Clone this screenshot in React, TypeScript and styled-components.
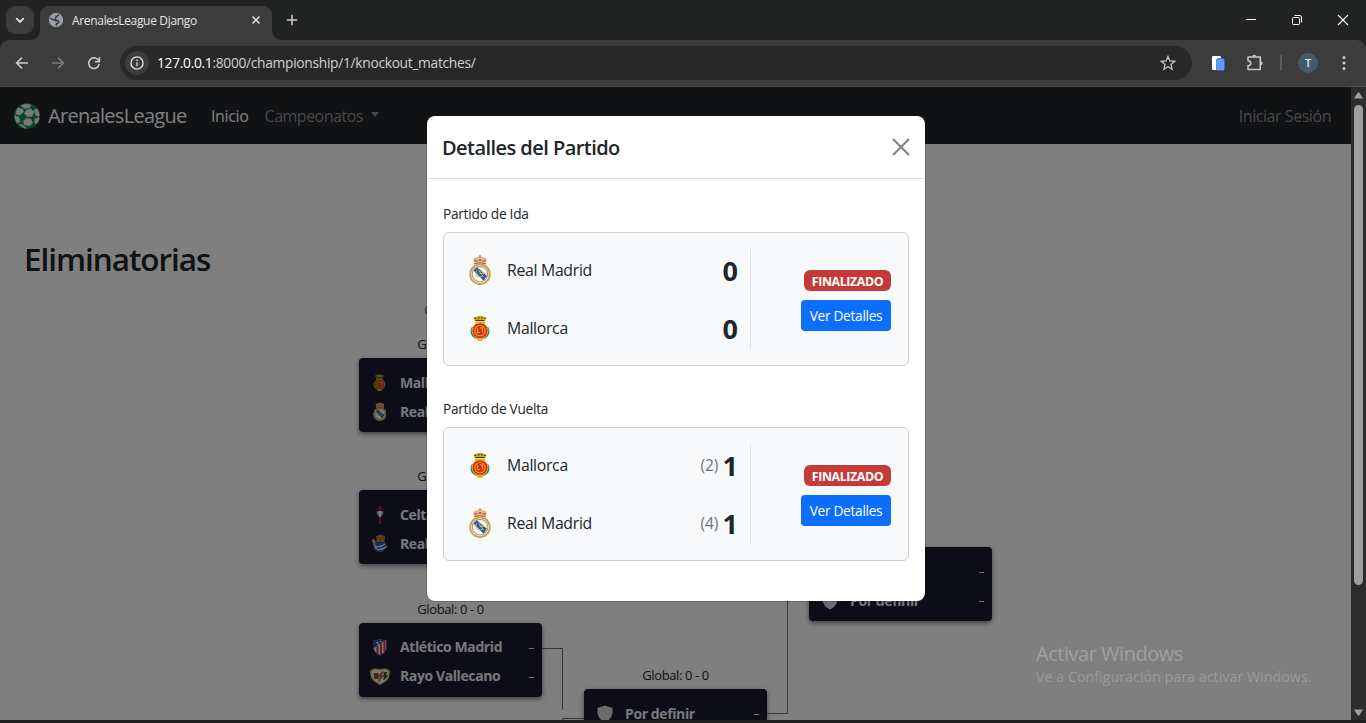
import React from "react";
import styled, { createGlobalStyle } from "styled-components";

const GlobalStyle = createGlobalStyle`
  * { box-sizing: border-box; }
  svg { display: block; flex: none; }
  body {
    margin: 0;
    overflow: hidden;
    font-family: "Open Sans", "Noto Sans", sans-serif;
    color: #212529;
    background: #201f1f;
  }
`;

/* ---------- text ---------- */

const Label = styled.span<{ $size: number; $track?: number; $weight?: number; $color?: string; $line?: number }>`
  display: block;
  white-space: nowrap;
  font-size: ${(p) => p.$size}px;
  line-height: ${(p) => p.$line ?? 20}px;
  letter-spacing: ${(p) => p.$track ?? 0}px;
  font-weight: ${(p) => p.$weight ?? 400};
  color: ${(p) => p.$color ?? "#212529"};
`;

/* ---------- browser frame ---------- */

const Window = styled.div`
  display: flex;
  flex-direction: column;
  width: 1366px;
  height: 723px;
  overflow: hidden;
`;

const TabStrip = styled.header`
  display: flex;
  height: 40px;
  padding: 6px 0 0 6px;
  background: #202322;
`;

const TabSearch = styled.div`
  display: grid;
  place-items: center;
  width: 28px;
  height: 28px;
  margin-right: 6px;
  border-radius: 9px;
  background: #3c3c3c;
`;

const Tab = styled.div`
  position: relative;
  display: flex;
  align-items: center;
  width: 232px;
  height: 34px;
  padding: 0 11px 6px 8px;
  border-radius: 9px 9px 0 0;
  background: #3c3c3c;
  &::before,
  &::after {
    content: "";
    position: absolute;
    bottom: 0;
    width: 9px;
    height: 9px;
  }
  &::before {
    left: -9px;
    background: radial-gradient(circle at 0 0, transparent 8.5px, #3c3c3c 9px);
  }
  &::after {
    right: -9px;
    background: radial-gradient(circle at 100% 0, transparent 8.5px, #3c3c3c 9px);
  }
`;

const TabTitle = styled(Label)`
  flex: 1;
  margin-left: 8px;
  padding-top: 2px;
`;

const NewTab = styled.div`
  flex: 1;
  padding: 8px 0 0 14px;
`;

const WindowButtons = styled.div`
  display: flex;
  gap: 34px;
  padding: 8px 17px 0 0;
  height: 20px;
`;

const ToolbarBack = styled.div`
  background: #202322;
`;

const Toolbar = styled.div`
  display: flex;
  align-items: center;
  height: 47px;
  padding: 0 14px 0 14px;
  border-bottom: 1px solid #4b4b4b;
  border-radius: 9px 9px 0 0;
  background: #3c3c3c;
`;

const NavButtons = styled.div`
  display: flex;
  flex: none;
  gap: 20px;
  width: 106px;
`;

const AddressBar = styled.div`
  display: flex;
  flex: none;
  align-items: center;
  width: 1072px;
  height: 34px;
  padding: 0 16px 0 5px;
  border-radius: 17px;
  background: #282828;
`;

const SiteInfo = styled.div`
  display: grid;
  place-items: center;
  width: 24px;
  height: 24px;
  margin-right: 8px;
  border-radius: 50%;
  background: #3c3c3c;
`;

const Url = styled(Label)`
  flex: 1;
  b { font-weight: 400; color: #ffffff; }
`;

const ToolbarActions = styled.div`
  display: flex;
  flex: none;
  align-items: center;
  padding-left: 18px;
`;

const PuzzleSlot = styled.div`
  margin-left: 20px;
`;

const Separator = styled.i`
  width: 2px;
  height: 16px;
  margin: 0 16px;
  border-radius: 1px;
  background: #5c5c5c;
`;

const Avatar = styled.div`
  display: grid;
  place-items: center;
  width: 20px;
  height: 20px;
  margin-right: 18px;
  border-radius: 50%;
  background: #455a66;
`;

/* ---------- page ---------- */

const Viewport = styled.div`
  position: relative;
  display: flex;
  height: 633px;
`;

const Page = styled.div`
  width: 1351px;
  height: 633px;
  overflow: hidden;
  background: #ffffff;
`;

const Scrollbar = styled.div`
  display: flex;
  flex-direction: column;
  align-items: center;
  width: 15px;
  padding: 5px 0 4px;
  background: #2c2c2c;
`;

const Thumb = styled.div`
  width: 9px;
  height: 480px;
  margin: 6px 0 auto;
  border-radius: 5px;
  background: #9f9f9f;
`;

const Navbar = styled.nav`
  display: flex;
  align-items: center;
  height: 57px;
  padding: 0 20px 0 13px;
  background: #212529;
`;

const Brand = styled(Label)`
  width: 163px;
  margin-left: 7px;
`;

const MenuLabel = styled(Label)`
  margin-left: 16px;
`;

const Caret = styled.i`
  margin: 0 auto 3px 8px;
  border: 4.5px solid transparent;
  border-top: 5px solid #8f9193;
  border-bottom: 0;
`;

const Title = styled.h1`
  margin: 95px 0 0 24px;
  font-size: 31.5px;
  line-height: 40px;
  font-weight: 600;
  letter-spacing: -1.05px;
`;

const Bracket = styled.section`
  position: relative;
  display: flex;
  gap: 42px;
  padding-left: 359px;
`;

const Round = styled.div<{ $top: number }>`
  display: flex;
  flex-direction: column;
  align-items: center;
  width: 183px;
  padding-top: ${(p) => p.$top}px;
`;

const RoundName = styled(Label)`
  margin-bottom: 15px;
`;

const Tie = styled.article`
  display: flex;
  flex-direction: column;
  align-items: center;
  width: 183px;
  margin-bottom: 35.4px;
`;

const TieCard = styled.div`
  width: 183px;
  height: 74px;
  margin-top: 4px;
  padding: 10px 8px 6px;
  border-radius: 4px;
  background: #1a1a2e;
  box-shadow: 0 2px 5px rgba(0, 0, 0, 0.5);
`;

const TieRow = styled.div`
  display: grid;
  grid-template-columns: 25px 1fr auto;
  column-gap: 8px;
  align-items: center;
  height: 29px;
  svg { justify-self: center; }
`;

const Dash = styled.i`
  width: 5px;
  height: 1px;
  margin: 2px 0 0;
  background: #e6e6e6;
`;

const Connectors = styled.svg`
  position: absolute;
  left: 0;
  top: 1px;
  pointer-events: none;
`;

/* ---------- modal ---------- */

const Backdrop = styled.div`
  position: absolute;
  inset: 0 15px 0 0;
  background: rgba(0, 0, 0, 0.5);
`;

const Modal = styled.div`
  position: absolute;
  left: 427px;
  top: 29px;
  width: 498px;
  height: 485px;
  border-radius: 8px;
  background: #ffffff;
  box-shadow: 0 0 0 1px rgba(0, 0, 0, 0.18);
`;

const ModalHeader = styled.div`
  display: flex;
  align-items: center;
  justify-content: space-between;
  height: 63px;
  padding: 0 15px;
  border-bottom: 1px solid #dee2e6;
`;

const ModalTitle = styled(Label)`
  padding-top: 2px;
`;

const ModalBody = styled.div`
  padding: 25px 16px 0;
`;

const Leg = styled.section`
  margin-bottom: 33px;
`;

const LegCard = styled.div`
  display: flex;
  height: 134px;
  margin-top: 8px;
  padding: 16px 17px 16px 16px;
  border: 1px solid #cfd2d5;
  border-radius: 6px;
  background: #f8f9fa;
`;

const Teams = styled.div`
  display: flex;
  flex-direction: column;
  gap: 16px;
  width: 291px;
  height: 100px;
  padding-right: 12px;
  border-right: 1px solid #dee2e6;
`;

const TeamRow = styled.div`
  display: grid;
  grid-template-columns: 40px 1fr auto 16px;
  align-items: center;
  height: 42px;
  column-gap: 4px;
  svg { justify-self: center; }
`;

const TeamName = styled(Label)`
  margin-left: 3px;
`;

const Score = styled(Label)`
  padding-top: 2px;
  text-align: right;
`;

const LegActions = styled.div`
  display: flex;
  flex: 1;
  flex-direction: column;
  align-items: flex-end;
  justify-content: center;
  gap: 9px;
  padding-top: 2px;
`;

const Badge = styled.span`
  width: 87px;
  height: 21px;
  border-radius: 6px;
  background: #c53a38;
  color: #ffffff;
  font-size: 12.4px;
  font-weight: 700;
  line-height: 23.5px;
  letter-spacing: -0.4px;
  text-align: center;
`;

const DetailsButton = styled.button`
  width: 90px;
  height: 31px;
  padding: 0;
  border: 0;
  border-radius: 4px;
  background: #0d6efd;
  color: #ffffff;
  font-family: inherit;
  font-size: 13.7px;
  line-height: 31px;
  letter-spacing: -0.3px;
`;

const Watermark = styled.div`
  position: absolute;
  left: 1036px;
  top: 554px;
`;

/* ---------- drawings ---------- */

const MadridCrest = ({ h = 30 }: { h?: number }) => (
  <svg width={(h * 22) / 30} height={h} viewBox="0 0 22 30">
    <path d="M5.500 9.500 4 4.500Q5 2 8 2.500L11 .8l3 1.700q3-.5 4 2l-1.500 5Q11 7.800 5.500 9.500Z" fill="#dfbd8c" />
    <path d="M5.500 5h3v1.500h-3zM9.800 4h2.400v2H9.800zM13.500 5h3v1.500h-3z" fill="#cf5560" />
    <path d="M11 0v2.500M5 8.800q6-1.800 12 0" stroke="#c06a5a" strokeWidth="1.200" fill="none" />
    <circle cx="11" cy="19.200" r="9.800" fill="#fbfaf5" stroke="#c4a54c" strokeWidth="1.900" />
    <circle cx="11" cy="19.200" r="7.800" fill="none" stroke="#a99d78" strokeWidth="1.100" />
    <path d="M4.500 15.500 8 12.300l10 8.400-3.500 5Z" fill="#2f57a6" />
    <path d="M7.500 15.500q-2 4 1 6 3.500 1.500 5.500-1M9 14.500l5.500 7.500M10.500 18.500h4q-.5-2.500-3-2.500" fill="none" stroke="#d3b648" strokeWidth="1" />
  </svg>
);

const MallorcaCrest = ({ h = 26 }: { h?: number }) => (
  <svg width={(h * 20) / 26} height={h} viewBox="0 0 20 26">
    <path d="M2 12q-3 4 0 9l4 3h8l4-3q3-5 0-9Z" fill="#16805a" />
    <path d="M5 6.500 3.500 2 7 1.500 10 .5l3 1 3.500.5L15 6.500Z" fill="#c5b316" />
    <path d="M4.500 3.500h2M8 2.800h1.500M11 2.800h1.500M14 3.500h1.500M5.500 5.500h9" stroke="#3f3a12" strokeWidth="1.200" />
    <path d="M5 7h10v4H5zM5 22h10l-3 4H8z" fill="#d7c21c" />
    <circle cx="10" cy="15.700" r="8" fill="#d92c1c" stroke="#d8c31d" strokeWidth="1" />
    <circle cx="10" cy="15.700" r="5.200" fill="none" stroke="#efa51c" strokeWidth="1.100" />
    <path d="M7.500 13v4.500h2.500M10 13h2.500v4.500" fill="none" stroke="#f2b01e" strokeWidth="1.100" />
  </svg>
);

const CeltaCrest = () => (
  <svg width="10" height="18" viewBox="0 0 10 18">
    <path d="M5 0v18M2.500 2.500h5" stroke="#b02540" strokeWidth="1.700" />
    <path d="M1 5h8l-1.500 4L5 12 2.500 9Z" fill="#9dbbd2" />
    <path d="M5 5v6M3 6.500h4" stroke="#f4f4f4" strokeWidth="1.800" />
    <path d="M5 11v7M1 5.500h1.500M7.500 5.500H9" stroke="#b02540" strokeWidth="1.600" />
  </svg>
);

const SociedadCrest = () => (
  <svg width="16" height="19" viewBox="0 0 16 19">
    <path d="M4.500 8V4L4 2l3-.8L8.500 0 10 1.200l3 .8-.5 6Z" fill="#b9812f" />
    <path d="M5.500 3.500h1.500M10 3.500h1.500M7 6h3" stroke="#6f4a1b" strokeWidth="1" />
    <path d="M1 5l9 12" stroke="#dfc58b" strokeWidth="1.200" />
    <path d="M.5 9 13.500 8l2 5-5 5-6-.5-3-3Z" fill="#2e61ae" />
    <path d="M4 12.500q4 1 9-2.500M5 15.500q5 1 9.500-3M.5 6l4 9" stroke="#dfe9f4" strokeWidth="1.300" fill="none" />
  </svg>
);

const AtleticoCrest = () => (
  <svg width="14" height="17" viewBox="0 0 14 17">
    <path d="M.5 1.500 7 .5l6.500 1V10Q12 14.500 7 16.500 2 14.500.5 10Z" fill="#f0eef0" />
    <path d="M4.500 7v8M8 4.500V16M11.500 2v11" stroke="#cf3048" strokeWidth="1.900" />
    <path d="M.5 1.500 7 .5l5 .8L.5 9.500Z" fill="#33508f" />
    <path d="M3 3.500h2v3M7 2.500h1.500" stroke="#e6ebf4" strokeWidth="1.200" fill="none" />
    <path d="M.5 1.500V10Q2 14.500 7 16.500 12 14.500 13.500 10V1.500" fill="none" stroke="#3a4c85" strokeWidth=".7" />
  </svg>
);

const RayoCrest = () => (
  <svg width="20" height="17" viewBox="0 0 20 17">
    <path d="M1 2.500 5 1l5 .8L15 1l4 1.500Q20 9 15.500 13L10 16.500 4.500 13Q0 9 1 2.500Z" fill="#f2efe0" stroke="#d5bd55" strokeWidth="1.300" />
    <path d="M3.500 5h5v6h-4Z" fill="#b83b22" />
    <path d="M4.500 5v5M8 5v6" stroke="#4e6930" strokeWidth="1" />
    <path d="M13 3.500 9.500 8h2.500l-3 5" fill="none" stroke="#dc3439" strokeWidth="1.500" />
    <path d="M13.500 5h2.500l-2 3h2.500l-3 3.500" fill="none" stroke="#36322c" strokeWidth="1.700" />
  </svg>
);

const ShieldIcon = () => (
  <svg width="16" height="18" viewBox="0 0 16 18">
    <path d="M8 .5 15.500 3v5Q14.500 14.500 8 17.500 1.500 14.500.5 8V3Z" fill="#d9d9d9" />
  </svg>
);

const BallLogo = () => (
  <svg width="28" height="28" viewBox="0 0 28 28">
    <defs>
      <clipPath id="ball"><circle cx="14" cy="14" r="12.600" /></clipPath>
    </defs>
    <circle cx="14" cy="14" r="13" fill="#0b8c4c" />
    <g clipPath="url(#ball)" fill="#f2f2f2" stroke="#f2f2f2" strokeWidth=".6" strokeLinejoin="round">
      <path d="M8 3.500 13 2l5 1-1.500 2.800-5 .8Z" />
      <path d="M13 8.500l4.500-1.700 3.500 3-1.800 4.500-5 .2-2.700-3Z" />
      <path d="M4.500 6 9.500 7l1 3-3.800 3.300-4-1.500Z" />
      <path d="M1 13.500l5 1.700 1 4.300-3 2Z" />
      <path d="M13 16.500l4.700.5 2 4-3.500 3-5-1.500-.7-3.500Z" />
      <path d="M21.500 8l3-1.500L27 12l-1.500 2.500-3-1.500ZM22 17l4-1.500.5 2-3 4.500-2-1.500Z" />
      <path d="M6 22.500l3.500.5 3.500 2.500v2Z" />
    </g>
  </svg>
);

const GlobeIcon = () => (
  <svg width="16" height="16" viewBox="0 0 16 16">
    <circle cx="8" cy="8" r="7.200" fill="#9ba0a8" />
    <path d="M2.200 6.200l3.300 1.600q2 .3 2.200-1.300-.2-1.700 1.300-2.200l1.800-1.800" fill="none" stroke="#3c3c3c" strokeWidth="1.500" />
    <path d="M6.500 8.600h3.300q1.400.6.900 2-.6 1-2 1l-.8 2.400" fill="none" stroke="#3c3c3c" strokeWidth="1.600" />
  </svg>
);

const stroke = (d: string, color: string, width: number, size = 16) => (
  <svg width={size} height={size} viewBox={`0 0 ${size} ${size}`} fill="none" stroke={color} strokeWidth={width}>
    <path d={d} />
  </svg>
);

const BackIcon = () => stroke("M14 8H3M8 2.600 2.600 8 8 13.400", "#c7c7c7", 1.600);
const ForwardIcon = () => stroke("M2 8h11M8 2.600 13.400 8 8 13.400", "#7c7c7c", 1.600);
const ReloadIcon = () => stroke("M13 6.500A5.300 5.300 0 1 0 13.200 9M13.400 2v4.700H8.800", "#c7c7c7", 1.600);
const ChevronIcon = () => stroke("M4.200 6.200 8 10l3.800-3.800", "#e3e3e3", 1.800);
const TabCloseIcon = () => stroke("M1.500 1.500l7 7M8.500 1.500l-7 7", "#e3e3e3", 1.500, 10);
const PlusIcon = () => stroke("M6 .8v10.400M.8 6h10.400", "#d0d0d0", 1.500, 12);
const MinimizeIcon = () => stroke("M1 5.500h10", "#ffffff", 1, 12);
const CloseWindowIcon = () => stroke("M1 1l10 10M11 1 1 11", "#ffffff", 1.100, 12);
const ModalCloseIcon = () => stroke("M1 1l16 16M17 1 1 17", "#7f7f7f", 2, 18);

const RestoreIcon = () => (
  <svg width="12" height="12" viewBox="0 0 12 12" fill="none" stroke="#ffffff">
    <rect x="1.500" y="3.500" width="7" height="7" rx="1" />
    <path d="M3.500 1.500H9q1.500 0 1.500 1.500v5.500" />
  </svg>
);

const InfoIcon = () => (
  <svg width="14" height="14" viewBox="0 0 14 14" fill="none" stroke="#dedede" strokeWidth="1.400">
    <circle cx="7" cy="7" r="6.100" />
    <path d="M7 6.200v4M7 3.500v1.500" />
  </svg>
);

const StarIcon = () => (
  <svg width="16" height="16" viewBox="0 0 16 16" fill="none" stroke="#c7c7c7" strokeWidth="1.300">
    <path d="M8 1.500 9.900 6l4.700.4-3.600 3.100 1.100 4.700L8 11.700l-4.100 2.500L5 9.500 1.400 6.400 6.100 6Z" />
  </svg>
);

const DevicesIcon = () => (
  <svg width="16" height="16" viewBox="0 0 16 16">
    <rect x="2" y="1" width="9" height="14" rx="1.200" fill="#ffffff" />
    <rect x="6.500" y="3.500" width="8" height="12" rx="1.500" fill="#5c9dfc" stroke="#2f5fae" strokeWidth=".6" />
  </svg>
);

const PuzzleIcon = () => (
  <svg width="18" height="18" viewBox="0 0 18 18">
    <path d="M2 3h12.300v12.500H2v-3.700q2.800-.3 2.800-2.500T2 6.800Z" fill="none" stroke="#c7c7c7" strokeWidth="1.600" strokeLinejoin="round" />
    <path d="M6.200 2.800a2 2 0 0 1 4 0ZM14.600 7.300a2 2 0 0 1 0 4Z" fill="#c7c7c7" />
  </svg>
);

const MenuDots = () => (
  <svg width="16" height="16" viewBox="0 0 16 16" fill="#c7c7c7">
    <circle cx="8" cy="2.600" r="1.500" />
    <circle cx="8" cy="8" r="1.500" />
    <circle cx="8" cy="13.400" r="1.500" />
  </svg>
);

const ScrollArrow = ({ down }: { down?: boolean }) => (
  <svg width="9" height="7" viewBox="0 0 9 7">
    <path d={down ? "M0 .5h9L5.200 6.500H3.800Z" : "M0 6.500h9L5.200.5H3.800Z"} fill="#9f9f9f" />
  </svg>
);

/* ---------- data ---------- */

type Side = { crest: React.ReactNode; name: string };

const tbd: Side = { crest: <ShieldIcon />, name: "Por definir" };

const quarterFinals: Side[][] = [
  [{ crest: <MallorcaCrest h={17} />, name: "Mallorca" }, { crest: <MadridCrest h={19} />, name: "Real Madrid" }],
  [{ crest: <CeltaCrest />, name: "Celta" }, { crest: <SociedadCrest />, name: "Real Sociedad" }],
  [{ crest: <AtleticoCrest />, name: "Atlético Madrid" }, { crest: <RayoCrest />, name: "Rayo Vallecano" }],
];

const legs = [
  {
    title: "Partido de Ida",
    teams: [
      { crest: <MadridCrest />, name: "Real Madrid", score: "0", penalties: "" },
      { crest: <MallorcaCrest />, name: "Mallorca", score: "0", penalties: "" },
    ],
  },
  {
    title: "Partido de Vuelta",
    teams: [
      { crest: <MallorcaCrest />, name: "Mallorca", score: "1", penalties: "(2)" },
      { crest: <MadridCrest />, name: "Real Madrid", score: "1", penalties: "(4)" },
    ],
  },
];

const TieView = ({ sides, aggregate }: { sides: Side[]; aggregate?: string }) => (
  <Tie>
    {aggregate && <Label $size={13} $line={19} $track={-0.4}>{aggregate}</Label>}
    <TieCard>
      {sides.map((side, i) => (
        <TieRow key={i}>
          {side.crest}
          <Label $size={14} $weight={700} $color="#f0f0f0" $track={-0.4}>{side.name}</Label>
          <Dash />
        </TieRow>
      ))}
    </TieCard>
  </Tie>
);

export default function App() {
  return (
    <Window>
      <GlobalStyle />
      <TabStrip>
        <TabSearch><ChevronIcon /></TabSearch>
        <Tab>
          <GlobeIcon />
          <TabTitle $size={12} $color="#e6e6e6" $track={-0.32}>ArenalesLeague Django</TabTitle>
          <TabCloseIcon />
        </Tab>
        <NewTab><PlusIcon /></NewTab>
        <WindowButtons>
          <MinimizeIcon />
          <RestoreIcon />
          <CloseWindowIcon />
        </WindowButtons>
      </TabStrip>
      <ToolbarBack>
        <Toolbar>
          <NavButtons>
            <BackIcon />
            <ForwardIcon />
            <ReloadIcon />
          </NavButtons>
          <AddressBar>
            <SiteInfo><InfoIcon /></SiteInfo>
            <Url $size={13.8} $color="#d0d0d0" $track={-0.31}><b>127.0.0.1</b>:8000/championship/1/knockout_matches/</Url>
            <StarIcon />
          </AddressBar>
          <ToolbarActions>
            <DevicesIcon />
            <PuzzleSlot><PuzzleIcon /></PuzzleSlot>
            <Separator />
            <Avatar><Label $size={11} $color="#e8eef2" $weight={600}>T</Label></Avatar>
            <MenuDots />
          </ToolbarActions>
        </Toolbar>
      </ToolbarBack>
      <Viewport>
        <Page>
          <Navbar>
            <BallLogo />
            <Brand $size={20} $line={30} $color="#ffffff" $track={-0.7}>ArenalesLeague</Brand>
            <Label $size={16} $line={24} $color="#ffffff" $track={-0.35}>Inicio</Label>
            <MenuLabel $size={16} $line={24} $color="#8f9193" $track={-0.5}>Campeonatos</MenuLabel>
            <Caret />
            <Label $size={16} $line={24} $color="#8f9193" $track={-0.45}>Iniciar Sesión</Label>
          </Navbar>
          <Title>Eliminatorias</Title>
          <Bracket>
            <Round $top={21}>
              <RoundName $size={14.5} $color="#6c757d">Cuartos</RoundName>
              {quarterFinals.map((sides, i) => (
                <TieView key={i} sides={sides} aggregate="Global: 0 - 0" />
              ))}
            </Round>
            <Round $top={387}>
              <TieView sides={[tbd]} aggregate="Global: 0 - 0" />
            </Round>
            <Round $top={264}>
              <TieView sides={[tbd, tbd]} />
            </Round>
            <Connectors width="1000" height="443" fill="none" stroke="#6f6f6f">
              <path d="M542 368.500h20.500v61.500M562.500 443v-4.500H584M767 433.500h20.500V290" />
            </Connectors>
          </Bracket>
        </Page>
        <Scrollbar>
          <ScrollArrow />
          <Thumb />
          <ScrollArrow down />
        </Scrollbar>
        <Backdrop />
        <Watermark>
          <Label $size={20} $line={26} $color="#a0a0a0" $track={-0.47}>Activar Windows</Label>
          <Label $size={14.3} $line={20} $color="#9b9b9b">Ve a Configuración para activar Windows.</Label>
        </Watermark>
        <Modal>
          <ModalHeader>
            <ModalTitle $size={20} $line={30} $weight={600} $track={-0.55}>Detalles del Partido</ModalTitle>
            <ModalCloseIcon />
          </ModalHeader>
          <ModalBody>
            {legs.map((leg) => (
              <Leg key={leg.title}>
                <Label $size={13.7} $line={20} $track={-0.27}>{leg.title}</Label>
                <LegCard>
                  <Teams>
                    {leg.teams.map((team) => (
                      <TeamRow key={team.name}>
                        {team.crest}
                        <TeamName $size={15.8} $line={24} $track={-0.3}>{team.name}</TeamName>
                        <Label $size={15.5} $line={24} $color="#6f7275" $track={-0.2}>{team.penalties}</Label>
                        <Score $size={27} $line={36} $weight={700}>{team.score}</Score>
                      </TeamRow>
                    ))}
                  </Teams>
                  <LegActions>
                    <Badge>FINALIZADO</Badge>
                    <DetailsButton>Ver Detalles</DetailsButton>
                  </LegActions>
                </LegCard>
              </Leg>
            ))}
          </ModalBody>
        </Modal>
      </Viewport>
    </Window>
  );
}
